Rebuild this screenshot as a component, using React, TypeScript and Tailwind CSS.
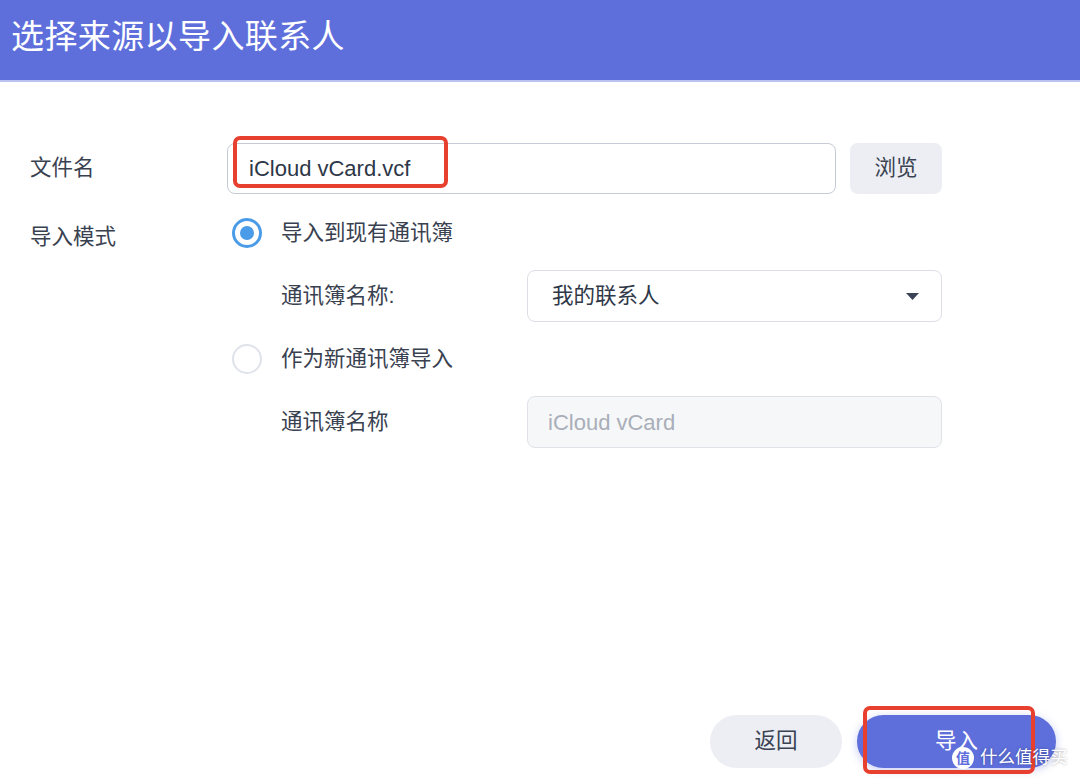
import React from "react"

const font = { fontFamily: '"Liberation Sans", "Noto Sans CJK SC", sans-serif' }

const Radio = ({ checked }: { checked?: boolean }) =>
  checked ? (
    <span className="flex h-[30px] w-[30px] shrink-0 items-center justify-center rounded-full border-[3px] border-[#4a9be8] bg-white">
      <span className="h-[14px] w-[14px] rounded-full bg-[#4a9be8]" />
    </span>
  ) : (
    <span className="h-[30px] w-[30px] shrink-0 rounded-full border-2 border-[#dfe2e9] bg-white" />
  )

export default function App() {
  return (
    <div className="relative flex h-[780px] w-[1080px] flex-col overflow-hidden bg-white text-[#394150]" style={font}>
      <header className="flex h-[82px] items-center border-b-2 border-[#bcc3f1] bg-[#5e6fdc] pb-[7px] pl-[11px]">
        <h1 className="text-[33px] font-normal leading-none tracking-[0.4px] text-white">选择来源以导入联系人</h1>
      </header>

      <main className="pl-[30px] pt-[61px] text-[21.5px]">
        {/* file name */}
        <div className="flex items-center">
          <span className="w-[197px]">文件名</span>
          <div className="flex h-[51px] w-[609px] items-center rounded-[8px] border border-[#c7cbd7] pl-[21px] text-[22px] text-[#2e3747]">
            iCloud vCard.vcf
          </div>
          <button className="ml-[14px] h-[51px] w-[92px] rounded-[8px] bg-[#eceef4] text-[#3a4251]">浏览</button>
        </div>

        {/* import mode */}
        <div className="mt-[22px] flex">
          <span className="w-[197px] pt-[5px]">导入模式</span>
          <div className="flex w-[715px] flex-col">
            <label className="flex h-[32px] items-center gap-[19px] pl-[5px] pt-[2px]">
              <Radio checked />
              导入到现有通讯簿
            </label>
            <div className="mt-[22px] flex items-center">
              <span className="w-[300px] shrink-0 pl-[54px]">通讯簿名称:</span>
              <div className="flex h-[52px] flex-1 items-center justify-between rounded-[8px] border border-[#dcdfe7] pl-[24px] pr-[22px] text-[#2f3848]">
                我的联系人
                <svg width="13" height="7" viewBox="0 0 13 7">
                  <path d="M0 0h13L6.5 7z" fill="#3a4256" />
                </svg>
              </div>
            </div>
            <label className="mt-[21px] flex h-[32px] items-center gap-[19px] pl-[5px]">
              <Radio />
              作为新通讯簿导入
            </label>
            <div className="mt-[21px] flex items-center">
              <span className="w-[300px] shrink-0 pl-[54px]">通讯簿名称</span>
              <div className="flex h-[52px] flex-1 items-center rounded-[8px] border border-[#dfe2e8] bg-[#f6f7f9] pl-[20px] text-[22px] text-[#a9aeb8]">
                iCloud vCard
              </div>
            </div>
          </div>
        </div>
      </main>

      <footer className="mt-auto flex justify-end gap-[15px] pb-[12px] pr-[24px] text-[21.5px]">
        <button className="h-[53px] w-[132px] rounded-full bg-[#eceef4] text-[#3a4251]">返回</button>
        <button className="h-[53px] w-[199px] rounded-full bg-[#5e6fdc] text-white shadow-[0_2px_8px_rgba(94,111,220,0.35)]">导入</button>
      </footer>

      {/* annotation boxes */}
      <div className="absolute left-[233px] top-[136px] h-[52px] w-[215px] rounded-[7px] border-[4px] border-[#e8402f]" />
      <div className="absolute left-[863px] top-[706px] h-[68px] w-[172px] rounded-[7px] border-[4px] border-[#e8402f]" />

      {/* watermark */}
      <div className="absolute left-[952px] top-[747px] flex items-center gap-[6px] text-white [text-shadow:0_0_3px_rgba(0,0,0,0.35)]">
        <span className="flex h-[22px] w-[22px] items-center justify-center rounded-full bg-white text-[14px] font-bold text-[#5e6fdc] [text-shadow:none]">值</span>
        <span className="text-[17.5px] leading-none">什么值得买</span>
      </div>
    </div>
  )
}
